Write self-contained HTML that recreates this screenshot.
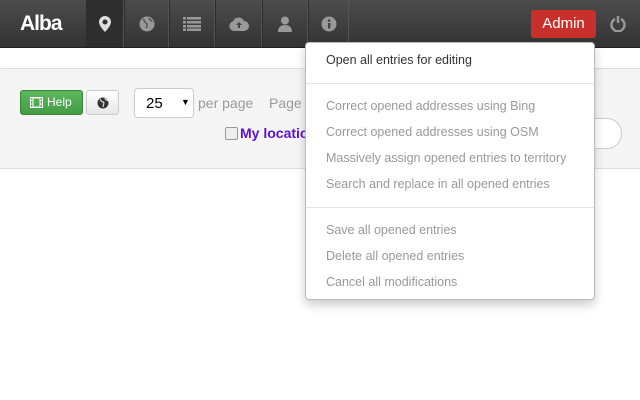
<!DOCTYPE html>
<html><head><style>
body{margin:0;width:640px;height:400px;position:relative;overflow:hidden;font-family:"Liberation Sans",sans-serif;background:#fff}
.nav{position:absolute;left:0;top:0;width:640px;height:47px;background:linear-gradient(#4c4c4c,#333);border-bottom:1px solid #222}
.logo{position:absolute;left:20px;top:12px;color:#fff;font-weight:bold;font-size:21px;letter-spacing:-1px}
.it{position:absolute;top:0;height:47px;border-left:1px solid #2c2c2c;border-right:1px solid #555;box-sizing:border-box}
.it svg{position:absolute;left:50%;top:50%;transform:translate(-50%,-50%)}
.admin{position:absolute;left:531px;top:10px;width:65px;height:28px;background:#c9302c;border-radius:3px;color:#fff;font-size:15px;text-align:center;line-height:28px}
.panel{position:absolute;left:-2px;top:68px;width:660px;height:99px;background:#f5f5f5;border:1px solid #ddd;border-radius:4px}
.help{position:absolute;left:20px;top:90px;width:63px;height:25px;background:linear-gradient(#5cb85c,#449d44);border:1px solid #398439;border-radius:3px;color:#fff;font-size:12px;line-height:23px;box-sizing:border-box;padding-left:26px}
.gbtn{position:absolute;left:86px;top:90px;width:33px;height:25px;background:linear-gradient(#fff,#e6e6e6);border:1px solid #ccc;border-radius:3px;box-sizing:border-box}
.sel{position:absolute;left:134px;top:88px;width:60px;height:30px;background:#fff;border:1px solid #ccc;border-radius:4px;box-sizing:border-box;font-size:15px;padding:6px 0 0 11px}
.g{position:absolute;color:#999;font-size:14px}
.dd{position:absolute;left:305px;top:42px;width:290px;height:258px;box-sizing:border-box;background:#fff;border:1px solid #bbb;border-radius:4px;box-shadow:0 5px 10px rgba(0,0,0,.2)}
.dd .t{position:absolute;left:20px;font-size:12.5px;color:#999;white-space:nowrap}
.dd .hr{position:absolute;left:0;width:288px;height:1px;background:#e5e5e5}
</style></head><body>
<div class="nav">
<div class="logo">Alba</div>
<div class="it" style="left:86px;width:38px;background:#2e2e2e"><svg width="12" height="16" viewBox="0 0 12 16"><path d="M6 0a6 6 0 0 0-6 6c0 4 6 10 6 10s6-6 6-10a6 6 0 0 0-6-6zm0 8.5a2.5 2.5 0 1 1 0-5 2.5 2.5 0 0 1 0 5z" fill="#ddd"/></svg></div>
<div class="it" style="left:124px;width:45px"><svg width="16" height="16"><circle cx="8" cy="8" r="7.5" fill="#999"/><path d="M4 3c2 1 1 3 3 4s1 3 0 5M10 2c0 2 3 2 3 4" stroke="#555" stroke-width="1.5" fill="none"/></svg></div>
<div class="it" style="left:169px;width:46px"><svg width="18" height="14"><g fill="#999"><rect x="0" y="0" width="3" height="2.5"/><rect x="4" y="0" width="14" height="2.5"/><rect x="0" y="4" width="3" height="2.5"/><rect x="4" y="4" width="14" height="2.5"/><rect x="0" y="8" width="3" height="2.5"/><rect x="4" y="8" width="14" height="2.5"/><rect x="0" y="11.5" width="3" height="2.5"/><rect x="4" y="11.5" width="14" height="2.5"/></g></svg></div>
<div class="it" style="left:215px;width:47px"><svg width="20" height="14"><path d="M5 14a5 5 0 0 1-1-9.8A6 6 0 0 1 15 4a5 5 0 0 1 0 10z" fill="#999"/><path d="M10 5l-3 3h2v3h2V8h2z" fill="#444"/></svg></div>
<div class="it" style="left:262px;width:46px"><svg width="14" height="16"><circle cx="7" cy="4.5" r="4" fill="#999"/><path d="M0 16c0-5 3-7 7-7s7 2 7 7z" fill="#999"/></svg></div>
<div class="it" style="left:308px;width:41px"><svg width="16" height="16"><circle cx="8" cy="8" r="7.5" fill="#999"/><rect x="7" y="7" width="2.4" height="5.5" fill="#444"/><circle cx="8.2" cy="4.5" r="1.3" fill="#444"/></svg></div>
<div class="admin">Admin</div>
<svg style="position:absolute;left:610px;top:15px" width="16" height="17"><path d="M5 4a6.5 6.5 0 1 0 6 0" stroke="#999" stroke-width="2.4" fill="none"/><line x1="8" y1="1" x2="8" y2="8" stroke="#999" stroke-width="2.4"/></svg>
</div>
<div class="panel"></div>
<div class="help"><svg style="position:absolute;left:9px;top:6px" width="13" height="11"><rect x="0.5" y="0.5" width="12" height="10" fill="none" stroke="#fff"/><rect x="3" y="1" width="7" height="9" fill="none" stroke="#fff"/><path d="M0 3.5h3M0 7h3M10 3.5h3M10 7h3" stroke="#fff"/></svg>Help</div>
<div class="gbtn"><svg style="position:absolute;left:10px;top:6px" width="12" height="12"><circle cx="6" cy="6" r="5.5" fill="#333"/><path d="M3 2c1 1 1 3 3 3s0 3 0 5M8 1c0 2 2 2 3 3" stroke="#ddd" stroke-width="1.2" fill="none"/></svg></div>
<div class="sel">25<span style="position:absolute;left:46px;top:8px;font-size:9px">▼</span></div>
<div class="g" style="left:198px;top:95px">per page</div>
<div class="g" style="left:269px;top:95px">Page</div>
<div style="position:absolute;left:225px;top:127px;width:11px;height:11px;border:1px solid #999;border-radius:2px;background:#eee"></div>
<div style="position:absolute;left:240px;top:125px;color:#5b0fd6;font-weight:bold;font-size:14px">My location</div>
<div style="position:absolute;left:560px;top:118px;width:60px;height:29px;background:#fff;border:1px solid #ccc;border-radius:0 15px 15px 0"></div>
<div class="dd">
<div class="t" style="top:10px;color:#333">Open all entries for editing</div>
<div class="hr" style="top:40px"></div>
<div class="t" style="top:56px">Correct opened addresses using Bing</div>
<div class="t" style="top:82px">Correct opened addresses using OSM</div>
<div class="t" style="top:108px">Massively assign opened entries to territory</div>
<div class="t" style="top:134px">Search and replace in all opened entries</div>
<div class="hr" style="top:164px"></div>
<div class="t" style="top:180px">Save all opened entries</div>
<div class="t" style="top:206px">Delete all opened entries</div>
<div class="t" style="top:232px">Cancel all modifications</div>
</div>
</body></html>
